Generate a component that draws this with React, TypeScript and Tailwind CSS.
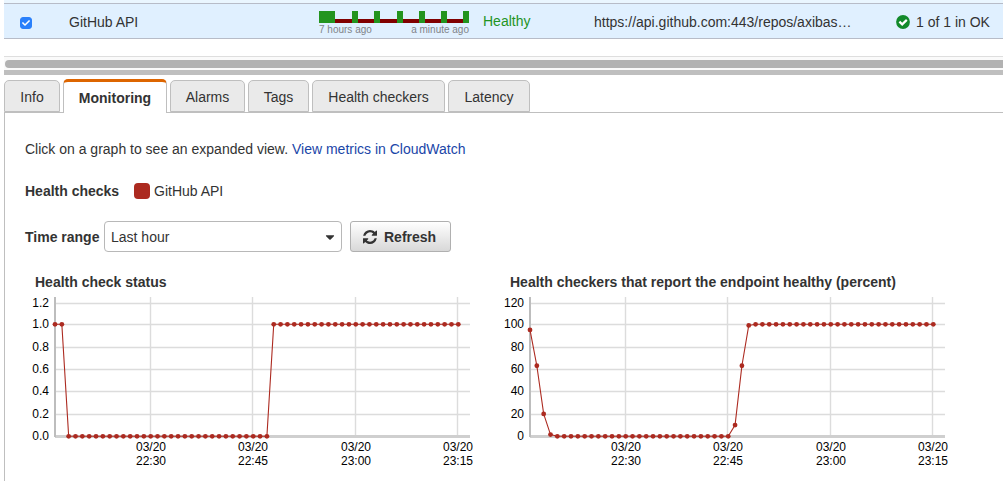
import { useState } from "react";
import { FaCaretDown, FaCheck } from "react-icons/fa";

type Tick = { label: string; y: number };

type ChartProps = {
  title: string;
  ticks: Tick[];
  values: number[];
  max: number;
};

const TABS = [
  { name: "Info", width: "w-14" },
  { name: "Monitoring", width: "w-[104px]" },
  { name: "Alarms", width: "w-[75px]" },
  { name: "Tags", width: "w-[61px]" },
  { name: "Health checkers", width: "w-[133px]" },
  { name: "Latency", width: "w-[82px]" },
];

const GRID_Y = [38, 59, 82, 104, 126, 149, 171];
const TIMES = [
  { time: "22:30", x: 126 },
  { time: "22:45", x: 228 },
  { time: "23:00", x: 331 },
  { time: "23:15", x: 433 },
];

const UP_SEGMENTS = [
  [0, 16],
  [33, 6],
  [55, 6],
  [78, 6],
  [100, 6],
  [122, 6],
  [144, 6],
];

const makeTicks = (labels: string[]): Tick[] => labels.map((label, i) => ({ label, y: GRID_Y[i] }));

const statusValues = Array.from({ length: 60 }, (_, i) => (i < 2 || i > 31 ? 1 : 0));

const percentValues = [
  95,
  63,
  20,
  1.5,
  ...Array<number>(26).fill(0),
  10,
  63,
  99,
  ...Array<number>(27).fill(100),
];

function Chart({ title, ticks, values, max }: ChartProps) {
  const points = values.map((v, i) => ({
    x: 30 + (i * 403.3) / 59,
    y: 171.3 - (v / max) * 112,
  }));
  return (
    <section className="w-[475px] shrink-0">
      <h2 className="pl-[10px] text-sm leading-5 font-bold text-[#333]">{title}</h2>
      <svg viewBox="0 27 475 180" width="475" height="180" className="block" role="img" aria-label={title}>
        {ticks.map((t) => (
          <g key={t.label}>
            <line x1="30" x2="445" y1={t.y + 0.5} y2={t.y + 0.5} stroke="#dcdcdc" strokeWidth="1.4" />
            <text x="24" y={t.y + 4} textAnchor="end" fontSize="12" fill="#000">
              {t.label}
            </text>
          </g>
        ))}
        {TIMES.map((t) => (
          <g key={t.time} fontSize="12" fill="#000" textAnchor="middle">
            <line x1={t.x - 0.5} x2={t.x - 0.5} y1="32" y2="171" stroke="#dcdcdc" strokeWidth="1.4" />
            <text x={t.x} y="186">03/20</text>
            <text x={t.x} y="200">{t.time}</text>
          </g>
        ))}
        <line x1="30" x2="445" y1="171.5" y2="171.5" stroke="#cfcfcf" strokeWidth="2.8" />
        <line x1="30" x2="30" y1="32" y2="172" stroke="#bdbdbd" strokeWidth="2" />
        <polyline
          points={points.map((p) => `${p.x},${p.y}`).join(" ")}
          fill="none"
          stroke="#ac2a20"
          strokeWidth="1.1"
        />
        {points.map((p) => (
          <circle key={p.x} cx={p.x} cy={p.y} r="2.4" fill="#ac2a20" />
        ))}
      </svg>
    </section>
  );
}

function Sparkline() {
  return (
    <svg width="150" height="12" viewBox="0 0 150 12" className="block" shapeRendering="crispEdges" aria-hidden="true">
      <rect x="0" y="8" width="150" height="4" fill="#800000" />
      {UP_SEGMENTS.map(([x, w]) => (
        <rect key={x} x={x} y="0" width={w} height="12" fill="#23941f" />
      ))}
    </svg>
  );
}

function RefreshIcon() {
  return (
    <svg viewBox="0 0 1536 1536" className="mr-[7px] size-[14px]" fill="currentColor" aria-hidden="true">
      <path d="M1511 928q0 5-1 7-64 268-268 434.5T764 1536q-146 0-282.5-55T238 1324l-129 129q-19 19-45 19t-45-19-19-45V960q0-26 19-45t45-19h448q26 0 45 19t19 45-19 45l-137 137q71 66 161 102t187 36q134 0 250-65t186-179q11-17 53-117 8-23 30-23h192q13 0 22.5 9.500t9.500 22.500zm25-800v448q0 26-19 45t-45 19h-448q-26 0-45-19t-19-45 19-45l138-138Q969 256 768 256q-134 0-250 65T332 500q-11 17-53 117-8 23-30 23H50q-13 0-22.500-9.500T18 608v-7q65-268 270-434.500T768 0q146 0 284 55.500T1297 212l130-129q19-19 45-19t45 19 19 45z" />
    </svg>
  );
}

export default function App() {
  const [active, setActive] = useState("Monitoring");
  const [checked, setChecked] = useState(true);

  return (
    <main className="flex min-h-screen flex-col overflow-x-hidden bg-white pl-1 font-['Liberation_Sans',Arial,sans-serif] text-sm leading-5 text-[#333]">
      <div className="h-[3px] bg-[#eaf6ff]" />
      <table className="w-full table-fixed border-collapse">
        <colgroup>
          <col className="w-[65px]" />
          <col className="w-[250px]" />
          <col className="w-[164px]" />
          <col className="w-[111px]" />
          <col />
          <col className="w-[107px]" />
        </colgroup>
        <tbody>
          <tr className="h-[35px] border-y border-[#b7bcc8] bg-[#e0f0ff]">
            <td className="p-0 pt-1 pl-4">
              <div className="grid size-3 place-items-center">
                <input
                  type="checkbox"
                  aria-label="Select GitHub API"
                  checked={checked}
                  onChange={(e) => setChecked(e.target.checked)}
                  className="col-start-1 row-start-1 size-3 appearance-none rounded-[3px] border border-[#a0a0a0] bg-white checked:border-[#2a80fb] checked:bg-[#2a80fb]"
                />
                {checked && (
                  <FaCheck className="pointer-events-none z-10 col-start-1 row-start-1 size-2 text-white" />
                )}
              </div>
            </td>
            <td className="p-0 pt-[2px]">GitHub API</td>
            <td className="p-0 pt-[2px]">
              <div className="w-[150px] pt-[3px]">
                <Sparkline />
                <div className="flex justify-between text-[10px] leading-[14px] text-[#808488]">
                  <span>7 hours ago</span>
                  <span>a minute ago</span>
                </div>
              </div>
            </td>
            <td className="p-0 text-[#1f941f]">Healthy</td>
            <td className="p-0 pt-[2px]">https://api.github.com:443/repos/axibas…</td>
            <td className="p-0 pt-[2px]">
              <div className="flex items-center gap-[6px] whitespace-nowrap">
                <svg viewBox="0 0 14 14" className="size-[14px]" aria-hidden="true">
                  <circle cx="7" cy="7" r="6.9" fill="#128a2b" />
                  <path d="M3.4 6.600 6.200 9.400 10.800 4.900" fill="none" stroke="#fff" strokeWidth="2.2" />
                </svg>
                1 of 1 in OK
              </div>
            </td>
          </tr>
        </tbody>
      </table>

      <div className="mt-[17px] border-t border-[#dedede] bg-[#fafafa] pt-[3px] pb-[2px] pl-px">
        <div className="h-2 rounded-l-full bg-[#b2b2b2]" />
      </div>
      <div className="h-[5px] bg-[#bfbfbf]" />

      <div role="tablist" className="mt-1 flex h-[34px] items-end gap-[3px]">
        {TABS.map(({ name, width }) => (
          <button
            key={name}
            type="button"
            role="tab"
            aria-selected={name === active}
            onClick={() => setActive(name)}
            className={`shrink-0 whitespace-nowrap rounded-t-[5px] border border-[#bfbfbf] ${width} ${
              name === active
                ? "z-10 h-[34px] border-t-[3px] border-b-0 border-t-[#dd6500] bg-white font-bold"
                : "mb-px h-8 bg-[#eaeaea] pt-px"
            }`}
          >
            {name}
          </button>
        ))}
      </div>

      <div role="tabpanel" className="-mt-px flex-1 border-t border-l border-[#bfbfbf] pt-[26px] pl-5">
        <p>
          Click on a graph to see an expanded view.{" "}
          <a href="#cloudwatch" className="text-[#1a46a8]">
            View metrics in CloudWatch
          </a>
        </p>

        <div className="mt-[22px] flex items-center">
          <span className="w-[109px] font-bold">Health checks</span>
          <span className="mr-1 size-4 rounded-[4px] bg-[#ac2a20]" />
          GitHub API
        </div>

        <div className="mt-5 flex h-[31px] items-center">
          <label htmlFor="range" className="w-[79px] font-bold">
            Time range
          </label>
          <div className="relative">
            <select
              id="range"
              defaultValue="hour"
              className="h-[31px] w-[238px] appearance-none rounded-[4px] border border-[#b8b8b8] bg-white px-[6px]"
            >
              <option value="hour">Last hour</option>
              <option value="day">Last day</option>
              <option value="week">Last week</option>
            </select>
            <FaCaretDown className="pointer-events-none absolute top-[9px] right-[5px] size-[14px]" />
          </div>
          <button
            type="button"
            className="ml-2 flex h-[31px] w-[101px] items-center rounded-[3px] border border-[#b0b0b0] bg-linear-to-b from-white to-[#d8d8d8] pl-3 font-bold"
          >
            <RefreshIcon />
            Refresh
          </button>
        </div>

        <div className="mt-5 flex">
          <Chart
            title="Health check status"
            ticks={makeTicks(["1.2", "1.0", "0.8", "0.6", "0.4", "0.2", "0.0"])}
            values={statusValues}
            max={1}
          />
          <Chart
            title="Health checkers that report the endpoint healthy (percent)"
            ticks={makeTicks(["120", "100", "80", "60", "40", "20", "0"])}
            values={percentValues}
            max={100}
          />
        </div>
      </div>
    </main>
  );
}
